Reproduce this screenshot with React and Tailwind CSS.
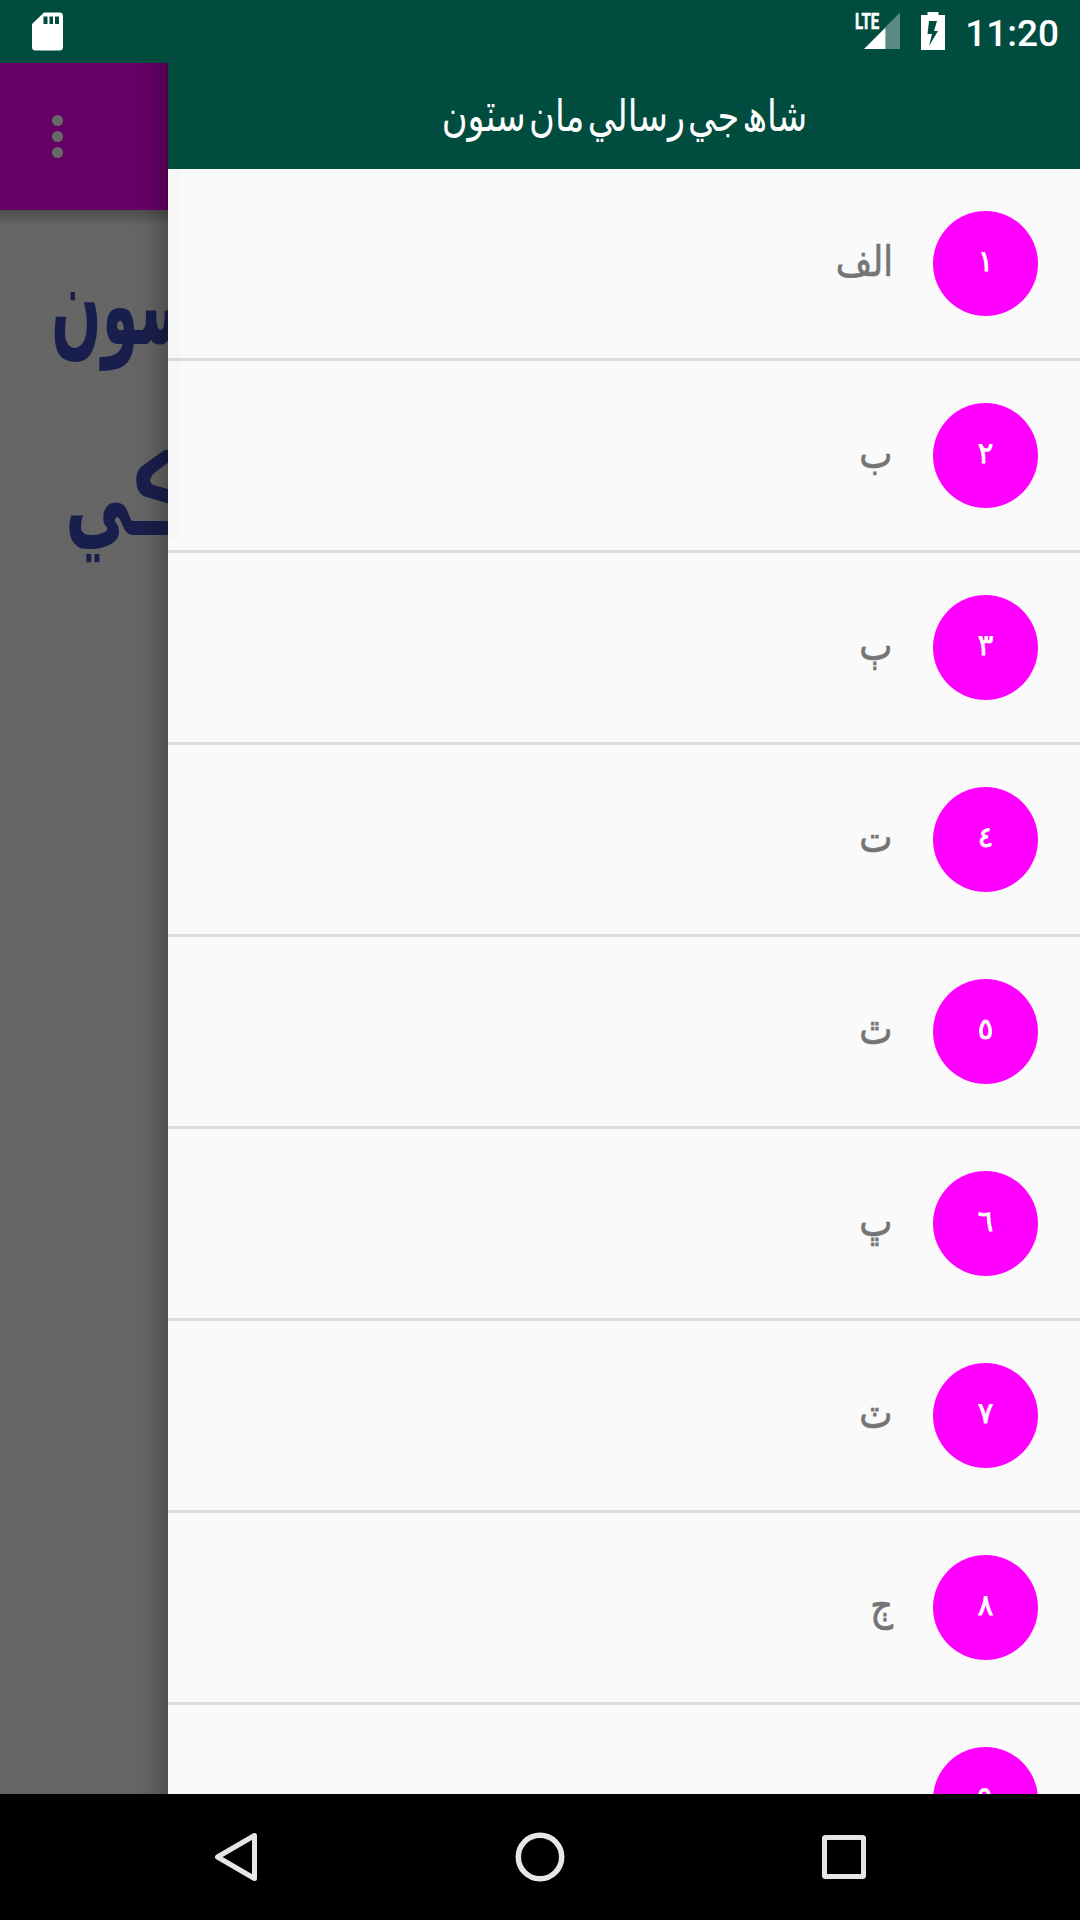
const letters = [
  { num: '١', label: 'الف' },
  { num: '٢', label: 'ب' },
  { num: '٣', label: 'ٻ' },
  { num: '٤', label: 'ت' },
  { num: '٥', label: 'ٿ' },
  { num: '٦', label: 'ڀ' },
  { num: '٧', label: 'ٽ' },
  { num: '٨', label: 'ڄ' },
  { num: '٩', label: '' },
]

function StatusBar() {
  return (
    <div className="h-[63px] shrink-0 bg-[#004d40] flex items-start justify-between pl-8 pr-[21px] text-white">
      <svg className="mt-3 w-[31px] h-[39px]" viewBox="0 0 31 39" fill="currentColor">
        <path
          fillRule="evenodd"
          d="M12 .5h15.500a3.500 3.500 0 0 1 3.500 3.500v31a3.500 3.500 0 0 1-3.500 3.500h-24A3.500 3.500 0 0 1 0 35V12zM11.500 4.500V12h4V4.500zM17.500 4.500V12h3.500V4.500zM23 4.500V12h4V4.500z"
        />
      </svg>
      <div className="flex items-start">
        <div className="relative w-[46px] h-[50px]">
          <svg className="absolute left-0 top-0" width="46" height="50" viewBox="0 0 46 50" fill="currentColor">
            <path d="M46 12.500v36.500H31.500V27z" fillOpacity=".35" />
            <path d="M31.500 27.500V49H10z" />
          </svg>
          <span className="absolute left-px top-[11px] origin-left scale-x-[0.68] font-['Roboto'] font-bold text-[22px] leading-[22px] [-webkit-text-stroke:0.6px_white]">
            LTE
          </span>
        </div>
        <svg className="ml-[21px] mt-3 w-6 h-[38px]" viewBox="0 0 24 38" fill="currentColor">
          <path fillRule="evenodd" d="M6.500 0h11v3H24v35H0V3h6.500zM8 9L6.500 22H11L8 34l9-15h-4l3-10z" />
        </svg>
        <span className="ml-[20px] mt-[15px] font-['Roboto'] font-medium text-[37px] leading-[38px]">11:20</span>
      </div>
    </div>
  )
}

function PageBehind() {
  return (
    <div dir="ltr" className="relative w-[168px] shrink-0 overflow-hidden bg-[#666666]">
      <div className="h-[147px] bg-[#660066] pl-[52px] flex flex-col justify-center gap-[5px]">
        <i className="block w-[11px] h-[11px] rounded-full bg-[#666b66]" />
        <i className="block w-[11px] h-[11px] rounded-full bg-[#666b66]" />
        <i className="block w-[11px] h-[11px] rounded-full bg-[#666b66]" />
      </div>
      <div className="h-4 bg-linear-to-b from-[#4e4e4e] to-[#666666]" />
      <div className="pl-[51px] font-['DejaVu_Sans'] font-bold text-[#191f4d] text-[112px] leading-[150px] whitespace-nowrap">
        <p className="mt-[4px] w-max origin-left scale-x-[0.53]">سون</p>
        <p className="mt-[41px] ml-[14px] w-max origin-left scale-x-[0.6]">ڪي</p>
      </div>
      {/* drawer shadow */}
      <div className="absolute inset-y-0 right-0 w-10 bg-linear-to-l from-black/22 via-black/5 to-transparent" />
    </div>
  )
}

function LetterRow({ num, label }) {
  return (
    <li className="h-48 shrink-0 border-b-[3px] border-[#dadada] px-[42px] flex items-center gap-[40px]">
      <span className="w-[105px] h-[105px] shrink-0 rounded-full bg-[#ff00ff] text-white text-[29px] leading-10 pb-1.5 flex items-center justify-center [-webkit-text-stroke:0.8px_white]">
        {num}
      </span>
      <span className="pb-1 origin-right scale-x-[0.84] text-[#757575] text-[42px] leading-[60px] [-webkit-text-stroke:0.7px_#757575]">
        {label}
      </span>
    </li>
  )
}

function Drawer() {
  return (
    <div
      dir="rtl"
      className="relative flex-1 flex flex-col overflow-hidden bg-[#fafafa] font-['DejaVu_Sans',sans-serif]"
    >
      <h1 className="h-[106px] shrink-0 bg-[#004d40] text-white text-[44px] leading-[106px] flex justify-center">
        <span className="scale-x-[0.8] whitespace-nowrap [word-spacing:-10px]">شاھ جي رسالي مان سٽون</span>
      </h1>
      <ul className="flex flex-col">
        {letters.map((item) => (
          <LetterRow key={item.num} {...item} />
        ))}
      </ul>
      {/* scrollbar */}
      <div className="absolute left-0 top-[106px] w-3 h-[371px] bg-black/[0.012]" />
    </div>
  )
}

function NavBar() {
  return (
    <div className="h-[126px] shrink-0 bg-black text-[#e6e6e6] flex items-center justify-between pl-[212px] pr-[212px]">
      <svg width="50" height="52" viewBox="0 0 50 52" fill="none" stroke="currentColor" strokeWidth="5" strokeLinejoin="round">
        <path d="M42.500 4.500v43L5.500 26z" />
      </svg>
      <svg width="52" height="52" viewBox="0 0 52 52" fill="none" stroke="currentColor" strokeWidth="5.500">
        <circle cx="25" cy="26" r="21.700" />
      </svg>
      <svg width="48" height="48" viewBox="0 0 48 48" fill="none" stroke="currentColor" strokeWidth="5" strokeLinejoin="round">
        <rect x="4.500" y="4.500" width="39" height="39" rx="1" />
      </svg>
    </div>
  )
}

export default function App() {
  return (
    <div className="w-[1080px] h-[1920px] flex flex-col overflow-hidden">
      <StatusBar />
      <div className="flex-1 min-h-0 flex">
        <PageBehind />
        <Drawer />
      </div>
      <NavBar />
    </div>
  )
}
